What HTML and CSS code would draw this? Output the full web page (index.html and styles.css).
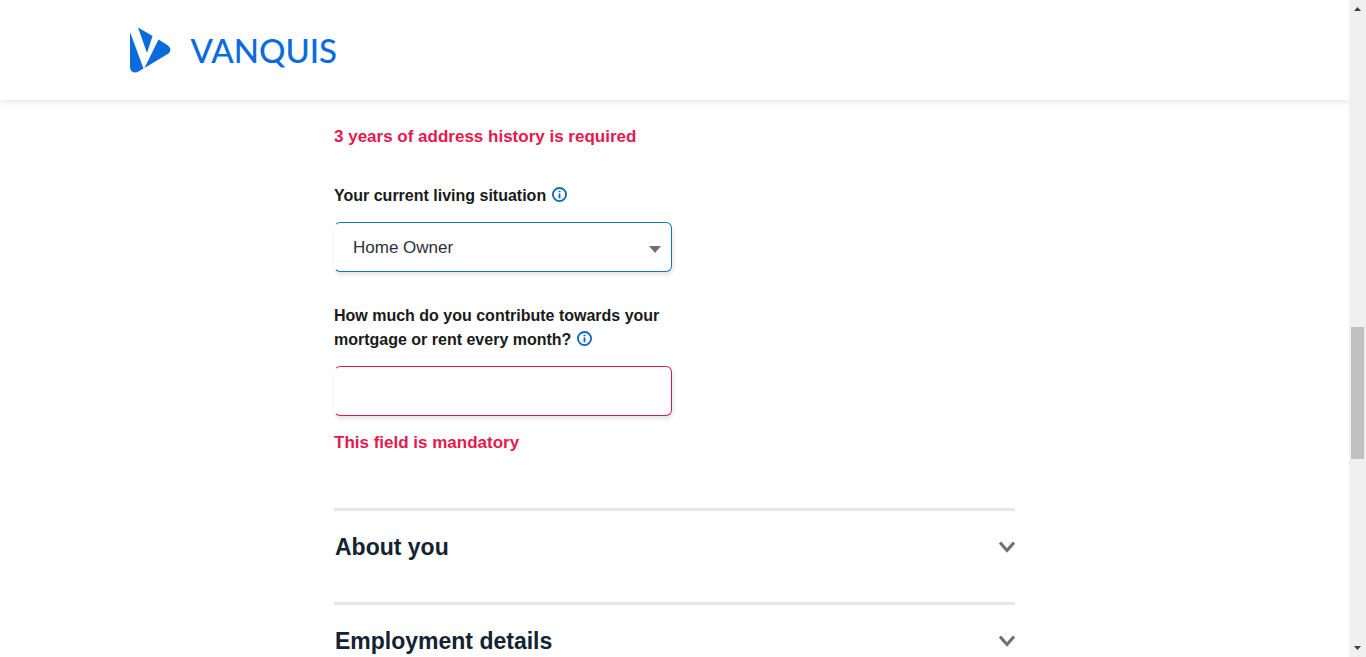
FILE: index.html
```html
<!DOCTYPE html>
<html lang="en">
<head>
<meta charset="utf-8">
<meta name="viewport" content="width=device-width, initial-scale=1">
<title>Vanquis application</title>
<link rel="stylesheet" href="styles.css">
</head>
<body>
<div class="page">
  <header class="header">
    <a class="brand" href="#">
      <svg class="brand-mark" viewBox="0 0 42 46" aria-hidden="true">
        <path d="M1 5 14.500 41.600 10 44.200Q6 46.500 3 44.500 1 43 1 39.500Z"/>
        <path d="M9 .5 23.500 9 18 26Z"/>
        <path d="M29.500 12.500 39 18.500Q43.500 22.500 39.500 26.500L15.500 41Z"/>
      </svg>
      <span class="brand-name">VANQUIS</span>
    </a>
  </header>
  <main class="content">
    <form class="form">
      <p class="error">3 years of address history is required</p>
      <div class="field">
        <div class="field-label">
          <label for="living">Your current living situation</label>
          <button class="info" type="button" aria-label="More information">
            <svg viewBox="0 0 16 16"><circle cx="8" cy="8" r="7"/><path d="M8 7v5M8 4v1.500"/></svg>
          </button>
        </div>
        <div class="select-wrap">
          <select class="control" id="living"><option>Home Owner</option></select>
          <svg class="caret" viewBox="0 0 12 7" aria-hidden="true"><path d="M0 0h12L6 7z"/></svg>
        </div>
      </div>
      <div class="field">
        <div class="field-label">
          <label for="contribution">How much do you contribute towards your mortgage or rent every month?</label>
          <button class="info" type="button" aria-label="More information">
            <svg viewBox="0 0 16 16"><circle cx="8" cy="8" r="7"/><path d="M8 7v5M8 4v1.500"/></svg>
          </button>
        </div>
        <input class="control control-invalid" id="contribution" type="text">
        <p class="error field-error">This field is mandatory</p>
      </div>
    </form>
    <section class="section">
      <button class="section-toggle" type="button">
        <span>About you</span>
        <svg class="chevron" viewBox="0 0 16 12" aria-hidden="true"><path d="M1 1.500 8 9.500 15 1.500"/></svg>
      </button>
    </section>
    <section class="section">
      <button class="section-toggle" type="button">
        <span>Employment details</span>
        <svg class="chevron" viewBox="0 0 16 12" aria-hidden="true"><path d="M1 1.500 8 9.500 15 1.500"/></svg>
      </button>
    </section>
  </main>
</div>
<div class="scrollbar" aria-hidden="true">
  <svg class="scroll-arrow" viewBox="0 0 17 17"><path d="M5 11 8.500 7 12 11z"/></svg>
  <div class="scroll-track"><div class="scroll-thumb"></div></div>
  <svg class="scroll-arrow" viewBox="0 0 17 17"><path d="M5 6 8.500 10 12 6z"/></svg>
</div>
</body>
</html>
```
FILE: styles.css
```css
* { box-sizing: border-box; }
body {
  margin: 0;
  height: 100vh;
  display: flex;
  overflow: hidden;
  background: #fff;
  color: #1a1a1a;
  font: 16px/24px "Liberation Sans", Arial, sans-serif;
}
p { margin: 0; }
button { padding: 0; border: 0; background: none; color: inherit; font: inherit; cursor: pointer; }
.page { flex: 1; min-width: 0; overflow: hidden; }
.header {
  padding: 27px 16px;
  box-shadow: 0 1px 6px rgba(0, 0, 0, .14);
}
.brand {
  display: flex;
  align-items: center;
  gap: 20px;
  max-width: 1092px;
  margin: 0 auto;
  color: #0a6cdc;
  text-decoration: none;
}
.brand-mark { width: 42px; height: 46px; fill: currentColor; }
.brand-name { font: 500 33px/46px Lato, sans-serif; }
.content { max-width: 681px; margin: 0 auto; padding-top: 25px; }
.form { max-width: 338px; }
.error { color: #e6194f; font-size: 17px; font-weight: bold; white-space: nowrap; }
.field { margin-top: 32px; }
.error + .field { margin-top: 35px; }
.field-label { margin-bottom: 14px; font-weight: bold; }
.info { margin-left: 1px; color: #1169bd; vertical-align: middle; }
.info svg {
  display: block;
  width: 15px;
  height: 15px;
  margin-bottom: 5px;
  fill: none;
  stroke: currentColor;
  stroke-width: 2;
}
.select-wrap { position: relative; }
.control {
  display: block;
  width: 100%;
  height: 50px;
  padding: 1px 18px 0;
  border: 1px solid #1871c4;
  border-left-color: transparent;
  border-radius: 6px;
  outline: 0;
  background: #fff;
  box-shadow: 1px 3px 5px rgba(0, 0, 0, .1);
  color: #2c2f3c;
  font: 17px/24px "Liberation Sans", Arial, sans-serif;
  appearance: none;
}
.control-invalid { border-color: #d81b5b; border-left-color: transparent; }
.caret { position: absolute; right: 11px; top: 24px; width: 12px; height: 7px; fill: #707070; }
.field-error { margin-top: 15px; }
.section { border-top: 3px solid #e6e6e6; padding: 20px 0 39px; }
.form + .section { margin-top: 53px; }
.section-toggle {
  display: flex;
  align-items: center;
  justify-content: space-between;
  width: 100%;
  padding-left: 1px;
  color: #14232f;
  font-size: 23px;
  font-weight: bold;
  line-height: 32px;
  text-align: left;
}
.chevron { width: 16px; height: 12px; fill: none; stroke: #707070; stroke-width: 3; }
.scrollbar { display: flex; flex-direction: column; width: 17px; background: #f0f0f0; }
.scroll-arrow { width: 17px; height: 17px; fill: #404040; }
.scroll-track { flex: 1; padding: 310px 2px 0; }
.scroll-thumb { height: 132px; background: #c1c1c1; }
```
